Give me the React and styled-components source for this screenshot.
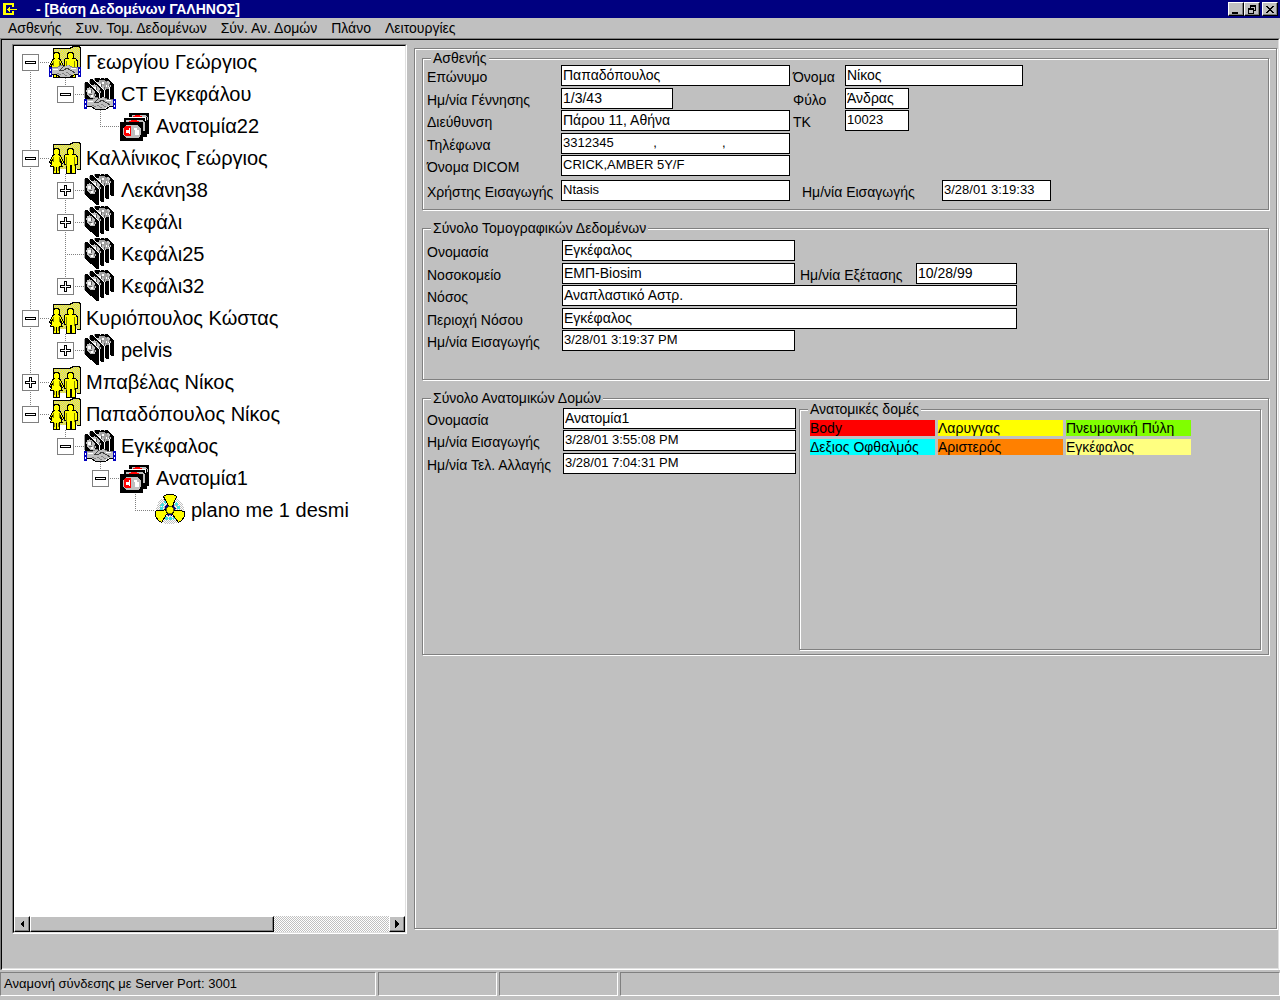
import React from "react";
import styled, { createGlobalStyle, css } from "styled-components";

const face = "#c0c0c0";
const shade = "#808080";
const light = "#e0e0e0";

const GlobalStyle = createGlobalStyle`
  *, *::before, *::after { box-sizing: border-box; }
  body {
    margin: 0;
    background: ${face};
    color: #000;
    font: 14px/16px "Liberation Sans", Arial, sans-serif;
  }
  button, input { font: inherit; color: inherit; }
`;

const etched = css`
  border: 1px solid ${shade};
  box-shadow: 1px 1px 0 #fff, inset 1px 1px 0 #fff;
`;

const raised = css`
  border: 1px solid;
  border-color: #fff #000 #000 #fff;
  box-shadow: inset -1px -1px 0 ${shade};
  background: ${face};
`;

const Window = styled.div`
  display: flex;
  flex-direction: column;
  min-height: 100vh;
`;

const TitleBar = styled.header`
  display: flex;
  align-items: center;
  height: 18px;
  padding: 0 2px;
  background: #000080;
  color: #fff;
`;

const Title = styled.h1`
  flex: 1;
  margin: 0 0 0 18px;
  font-size: 14px;
  line-height: 18px;
  font-weight: bold;
  white-space: pre;
`;

const CaptionButton = styled.button`
  ${raised}
  display: flex;
  align-items: center;
  justify-content: center;
  width: 16px;
  height: 14px;
  padding: 0;
  margin-left: ${(p) => (p.$apart ? "2px" : "0")};
`;

const MenuBar = styled.nav`
  display: flex;
  gap: 14px;
  height: 20px;
  padding: 0 8px;
`;

const MenuItem = styled.button`
  border: 0;
  background: none;
  padding: 0;
  line-height: 20px;
`;

const Workspace = styled.main`
  flex: 1;
  display: flex;
  padding: 4px 1px 35px 10px;
  border: 1px solid;
  border-color: #000 ${light} #fff #000;
  box-shadow: inset 0 -1px 0 ${light};
`;

const Frame = styled.div`
  flex: 1;
  display: flex;
  border-style: solid;
  border-width: 1px 1px 0 1px;
  border-color: ${shade} #fff #fff ${shade};
`;

const TreePane = styled.section`
  flex: 0 1 395px;
  display: flex;
  flex-direction: column;
  border: 1px solid;
  border-color: ${shade} #fff #fff ${shade};
  background: #fff;
`;

const TreeInner = styled.div`
  flex: 1;
  display: flex;
  flex-direction: column;
  border: 1px solid;
  border-color: #000 ${light} ${light} #000;
`;

const TreeList = styled.ul`
  flex: 1;
  margin: 0;
  padding: 0;
  list-style: none;
`;

const TreeRow = styled.li`
  display: flex;
  align-items: center;
  height: 32px;
  font-size: 20px;
  line-height: 32px;
  white-space: nowrap;
`;

const TreeLabel = styled.span`
  margin-left: 5px;
`;

const Expander = styled.button`
  display: block;
  border: 0;
  padding: 0;
  background: none;
`;

const Drawing = styled.svg`
  display: block;
  flex: none;
  shape-rendering: crispEdges;
`;

const ScrollBar = styled.div`
  display: flex;
  height: 16px;
  background: repeating-conic-gradient(#fff 0 25%, ${face} 0 50%) 0 0 / 2px 2px;
`;

const ScrollButton = styled.button`
  ${raised}
  display: flex;
  align-items: center;
  justify-content: center;
  width: 16px;
  padding: 0;
`;

const ScrollThumb = styled.div`
  ${raised}
  width: 68%;
`;

const ScrollTrack = styled.div`
  flex: 1;
  display: flex;
`;

const DetailPane = styled.section`
  ${etched}
  flex: 1;
  display: flex;
  flex-direction: column;
  gap: 11px;
  margin: 4px 0 5px 7px;
  padding: 2px 7px;
`;

const Group = styled.fieldset`
  ${etched}
  min-width: 0;
  min-height: ${(p) => p.$height}px;
  margin: 0;
  padding: ${(p) => p.$top || 0}px 7px 4px 4px;
`;

const Legend = styled.legend`
  margin-left: ${(p) => (p.$flush ? 0 : 4)}px;
  padding: 0 2px;
  line-height: 14px;
  background: ${face};
`;

const Split = styled.div`
  display: flex;
`;

const Nested = styled(Group)`
  flex: 1;
  margin: -6px 0 0 3px;
  padding: 4px 8px;
`;

const Rows = styled.div`
  display: grid;
  grid-template-rows: ${(p) => p.$tracks};
  align-items: start;
`;

const Row = styled.div`
  display: grid;
  grid-template-columns: ${(p) => p.$label}px ${(p) => p.$field}px auto;
  align-items: start;
  justify-content: start;
`;

const Label = styled.label`
  padding: 4px 0 0 ${(p) => p.$indent || 0}px;
  width: ${(p) => (p.$w ? p.$w + "px" : "auto")};
  white-space: nowrap;
`;

const Field = styled.input`
  width: ${(p) => (p.$w ? p.$w + "px" : "100%")};
  grid-column: ${(p) => (p.$wide ? "span 2" : "auto")};
  height: 21px;
  padding: 0 1px 2px;
  border: 1px solid #000;
  border-radius: 0;
  background: #fff;
  font-size: ${(p) => (p.$latin ? 13 : 14)}px;
  outline: 0;
`;

const Side = styled.div`
  display: flex;
`;

const Swatches = styled.ul`
  display: grid;
  grid-template-columns: repeat(3, 125px);
  gap: 3px;
  margin: 0;
  padding: 0 2px;
  list-style: none;
`;

const Swatch = styled.li`
  height: 16px;
  background: ${(p) => p.$color};
`;

const StatusBar = styled.footer`
  display: flex;
  gap: 2px;
  height: 30px;
  padding: 2px 0 4px;
`;

const StatusPane = styled.div`
  flex: ${(p) => (p.$w ? `0 1 ${p.$w}px` : "1")};
  padding: 2px 3px;
  border: 1px solid;
  border-color: ${shade} #fff #fff ${shade};
  font-size: 13px;
  line-height: 18px;
`;

function Guide({ up, down, side, box }) {
  return (
    <Drawing width="35" height="32" viewBox="0 0 35 32" aria-hidden="true">
      <g stroke={shade} strokeDasharray="1 1" fill="none">
        {up && <path d="M16.5 0V16" />}
        {down && <path d="M16.5 16V32" />}
        {side && <path d="M16 16.5H35" />}
      </g>
      {box && (
        <>
          <rect x="8.5" y="8.5" width="16" height="16" fill="#fff" stroke={shade} />
          {box === "minus" ? (
            <rect x="11.5" y="15.5" width="10" height="2" fill="#fff" stroke="#000" />
          ) : (
            <path d="M15.5 11.5h2v4h4v2h-4v4h-2v-4h-4v-2h4z" fill="#fff" stroke="#000" />
          )}
        </>
      )}
    </Drawing>
  );
}

function Hands() {
  return (
    <g>
      <path d="M3 21h5l4-2 4 1 4-1 4 2h5v7h-4l-5 3h-9l-5-3H3z" fill="#c0c0c0" />
      <path d="M3 28.500h4l5 3h9l5-3h3" fill="none" stroke="#000" />
      <path d="M3 21.500h5l4-2 4 1M20 19.500l4 2h5" fill="none" stroke="#808080" />
      <path d="M15 20l-4 4h4l3-2 8 5" fill="none" stroke="#404040" />
      <path d="M8 27l4 2M13 27l5 3M17 26l5 3" fill="none" stroke="#808080" />
      <path d="M4 23h5v1H4zM22 22h5v1h-5z" fill="#fff" />
      <path d="M0 21h3v10H0zM29 21h3v10h-3z" fill="#0000c0" />
      <path d="M1 23h1v2H1zM1 27h1v2H1zM30 23h1v2h-1zM30 27h1v2h-1z" fill="#fff" />
    </g>
  );
}

function PatientArt() {
  return (
    <g>
      <path d="M4 2H21V1H23V0H30V1H31V27H4z" fill="url(#folder)" />
      <path d="M4.500 8V2.500H21.500V1.500H23.500V.5H30.500V1.500H31.500V27.500H28" fill="none" stroke="#000" />
      <g fill="#ffff00" stroke="#000">
        <path d="M6 6.500h3l1.500 1.500v3L9.500 12.500l2 1 3 7-1.500 1-2-4 2 7h-3v6.500h-3v-6H7v6H4.500v-6.500H1.500l2-7-2 4L.5 20.500l3-7 2-1L4.500 11V8z" />
        <path d="M20 6.500h3L24.500 8v3L23.500 12.500h3l1.500 2v8h-2v8.500h-4v-8h-1v8h-4v-8.500h-2v-8l1.500-2h3L18.500 11V8z" />
      </g>
      <path d="M4.500 15v5M10.500 15v5M17.500 15v9M25.500 15v9M5.500 25v4M9.500 25v4" stroke="#808000" fill="none" />
    </g>
  );
}

function Slices() {
  return (
    <g>
      {[3, 2, 1, 0].map((i) => (
        <g key={i} transform={`translate(${i * 5} ${i * -3})`}>
          <path d="M0 5l2-1h2l11 12v15h-2L0 20z" fill="#000" />
          <path d="M3 3l12 12v17" stroke="#fff" fill="none" />
          <path d="M.5 5v15" stroke="#a0a0a0" fill="none" />
          <ellipse cx="7" cy="15" rx="4" ry="6" transform="rotate(-32 7 15)" fill="#c0c0c0" />
          <path d="M4 12h3v3H4zM7 17h2v2H7z" fill="#fff" />
          <path d="M7.500 11v4M5 16.500h3M10 15v3" stroke="#606060" fill="none" />
        </g>
      ))}
      <path d="M13 1h12v2H13z" fill="#000" />
      <path d="M15 2l5 0 4 4 1 5-3 0-4-4z" fill="#a0a0a0" />
      <path d="M18 4h2v2h-2zM22 7h1v2h-1z" fill="#fff" />
    </g>
  );
}

function AnatomyArt() {
  return (
    <g>
      <path d="M10 3h20v21H10z" fill="#000" />
      <path d="M13 5h14l2 3v2H13z" fill="#c0c0c0" />
      <path d="M14 8V6h2V5h5v1h2v3h-2V7h-5v2z" fill="#ff0000" />
      <path d="M5 7h23v20H5z" fill="#000" />
      <path d="M5 7.500H10M10 7.500H26V11" stroke="#fff" fill="none" />
      <path d="M7 10h17l2 3v8H8z" fill="#c0c0c0" />
      <path d="M10 13v-2h2v-1h6v1h2v2z" fill="#ff0000" />
      <path d="M1 12h23v19H1z" fill="#000" />
      <path d="M7 15h12l3 4v5l-2 4H7l-3-3v-7z" fill="#c0c0c0" />
      <path d="M6 16h6v10H6l-1-2v-6z" fill="#ff0000" />
      <path d="M7 20h3v-2h1v6h-1v-1H7z" fill="#fff" />
      <path d="M16 20h4v5h-4zM15 18h3v2h-3z" fill="#fff" />
    </g>
  );
}

function PlanArt() {
  const blade = "M9.500 2.500L13 .5h6l3.500 2L18.500 12h-4z";
  return (
    <g>
      <circle cx="16" cy="16.500" r="14" fill="url(#haze)" />
      <circle cx="16" cy="16" r="9" fill="none" stroke="#40e0e0" strokeWidth="3" strokeDasharray="3 1" />
      <circle cx="16" cy="16" r="6" fill="#000080" />
      <circle cx="16" cy="16" r="6" fill="none" stroke="#c0c0c0" strokeDasharray="2 2" />
      {[0, 120, 240].map((a) => (
        <path key={a} d={blade} transform={`rotate(${a} 16 16)`} fill="#ffff00" stroke="#000" />
      ))}
      <circle cx="16" cy="16" r="3.500" fill="#ffff00" stroke="#606000" />
    </g>
  );
}

function ItemIcon({ kind, shared }) {
  return (
    <Drawing width="32" height="32" viewBox="0 0 32 32" aria-hidden="true">
      {kind === "patient" && <PatientArt />}
      {kind === "dataset" && <Slices />}
      {kind === "anatomy" && <AnatomyArt />}
      {kind === "plan" && <PlanArt />}
      {shared && <Hands />}
    </Drawing>
  );
}

const line = { up: true, down: true };
const none = {};
const tee = { up: true, down: true, side: true };
const end = { up: true, side: true };

const tree = [
  { text: "Γεωργίου Γεώργιος", kind: "patient", shared: true, guides: [{ down: true, side: true, box: "minus" }] },
  { text: "CT Εγκεφάλου", kind: "dataset", shared: true, guides: [line, { ...end, box: "minus" }] },
  { text: "Ανατομία22", kind: "anatomy", guides: [line, none, end] },
  { text: "Καλλίνικος Γεώργιος", kind: "patient", guides: [{ ...tee, box: "minus" }] },
  { text: "Λεκάνη38", kind: "dataset", guides: [line, { ...tee, box: "plus" }] },
  { text: "Κεφάλι", kind: "dataset", guides: [line, { ...tee, box: "plus" }] },
  { text: "Κεφάλι25", kind: "dataset", guides: [line, tee] },
  { text: "Κεφάλι32", kind: "dataset", guides: [line, { ...end, box: "plus" }] },
  { text: "Κυριόπουλος Κώστας", kind: "patient", guides: [{ ...tee, box: "minus" }] },
  { text: "pelvis", kind: "dataset", guides: [line, { ...end, box: "plus" }] },
  { text: "Μπαβέλας Νίκος", kind: "patient", guides: [{ ...tee, box: "plus" }] },
  { text: "Παπαδόπουλος Νίκος", kind: "patient", guides: [{ ...end, box: "minus" }] },
  { text: "Εγκέφαλος", kind: "dataset", shared: true, guides: [none, { ...end, box: "minus" }] },
  { text: "Ανατομία1", kind: "anatomy", guides: [none, none, { ...end, box: "minus" }] },
  { text: "plano me 1 desmi", kind: "plan", guides: [none, none, none, end] },
];

const menus = ["Ασθενής", "Συν. Τομ. Δεδομένων", "Σύν. Αν. Δομών", "Πλάνο", "Λειτουργίες"];

const structures = [
  ["Body", "#ff0000"],
  ["Λαρυγγας", "#ffff00"],
  ["Πνευμονική Πύλη", "#80ff00"],
  ["Δεξιος Οφθαλμός", "#00ffff"],
  ["Αριστερός", "#ff8000"],
  ["Εγκέφαλος", "#ffff80"],
];

const phones = "3312345" + " ".repeat(11) + "," + " ".repeat(18) + ",";

const patientCols = { $label: 134, $field: 229 };
const datasetCols = { $label: 135, $field: 233 };
const anatomyCols = { $label: 136, $field: 233 };

function Entry({ id, label, value, w, wide, latin, labelWidth, indent }) {
  return (
    <>
      <Label htmlFor={id} $w={labelWidth} $indent={indent}>
        {label}
      </Label>
      <Field id={id} defaultValue={value} $w={w} $wide={wide} $latin={latin} />
    </>
  );
}

export default function App() {
  return (
    <Window>
      <GlobalStyle />
      <TitleBar>
        <Drawing width="16" height="16" viewBox="0 0 16 16" aria-hidden="true">
          <path d="M1 2h11v4h-2V4H4v8h6v-2h2v4H1z" fill="#ffff00" />
          <path d="M5 8l2-2h1v2h7v1H8v2H7L5 9z" fill="#ffff00" />
        </Drawing>
        <Title>- [Βάση Δεδομένων ΓΑΛΗΝΟΣ]</Title>
        <CaptionButton aria-label="Ελαχιστοποίηση">
          <Drawing width="10" height="9" aria-hidden="true">
            <path d="M1 7h6v2H1z" />
          </Drawing>
        </CaptionButton>
        <CaptionButton aria-label="Επαναφορά">
          <Drawing width="10" height="9" aria-hidden="true">
            <path d="M3 0h6v6H7V5h1V2H4v1H3zM1 3h6v6H1zM2 5v3h4V5z" fillRule="evenodd" />
          </Drawing>
        </CaptionButton>
        <CaptionButton $apart aria-label="Κλείσιμο">
          <Drawing width="10" height="9" aria-hidden="true">
            <path d="M1 1h2v1h1v1h2V2h1V1h2v1H8v1H7v1H6v1h1v1h1v1h1v1H7V7H6V6H4v1H3v1H1V7h1V6h1V5h1V4H3V3H2V2H1z" />
          </Drawing>
        </CaptionButton>
      </TitleBar>
      <MenuBar>
        {menus.map((m) => (
          <MenuItem key={m}>{m}</MenuItem>
        ))}
      </MenuBar>
      <Frame>
        <Workspace>
          <TreePane>
            <TreeInner>
              <TreeList>
                {tree.map((item) => (
                  <TreeRow key={item.text}>
                    {item.guides.map((g, i) =>
                      g.box ? (
                        <Expander key={i} aria-label={item.text} aria-expanded={g.box === "minus"}>
                          <Guide {...g} />
                        </Expander>
                      ) : (
                        <Guide key={i} {...g} />
                      )
                    )}
                    <ItemIcon kind={item.kind} shared={item.shared} />
                    <TreeLabel>{item.text}</TreeLabel>
                  </TreeRow>
                ))}
              </TreeList>
              <ScrollBar>
                <ScrollButton aria-label="Αριστερά">
                  <Drawing width="8" height="8" aria-hidden="true">
                    <path d="M6 0v8L2 4z" />
                  </Drawing>
                </ScrollButton>
                <ScrollTrack>
                  <ScrollThumb />
                </ScrollTrack>
                <ScrollButton aria-label="Δεξιά">
                  <Drawing width="8" height="8" aria-hidden="true">
                    <path d="M2 0v8l4-4z" />
                  </Drawing>
                </ScrollButton>
              </ScrollBar>
            </TreeInner>
          </TreePane>

          <DetailPane>
            <Group $height={159}>
              <Legend>Ασθενής</Legend>
              <Rows $tracks="23px 22px 23px 22px 25px 21px">
                <Row {...patientCols}>
                  <Entry id="surname" label="Επώνυμο" value="Παπαδόπουλος" />
                  <Side>
                    <Entry id="name" label="Όνομα" value="Νίκος" w={178} labelWidth={55} indent={3} />
                  </Side>
                </Row>
                <Row {...patientCols}>
                  <Entry id="birth" label="Ημ/νία Γέννησης" value="1/3/43" w={112} />
                  <Side>
                    <Entry id="sex" label="Φύλο" value="Άνδρας" w={64} labelWidth={55} indent={3} />
                  </Side>
                </Row>
                <Row {...patientCols}>
                  <Entry id="address" label="Διεύθυνση" value="Πάρου 11, Αθήνα" />
                  <Side>
                    <Entry id="zip" label="ΤΚ" value="10023" w={64} labelWidth={55} indent={3} latin />
                  </Side>
                </Row>
                <Row {...patientCols}>
                  <Entry id="phones" label="Τηλέφωνα" value={phones} latin />
                </Row>
                <Row {...patientCols}>
                  <Entry id="dicom" label="Όνομα DICOM" value="CRICK,AMBER 5Y/F" latin />
                </Row>
                <Row {...patientCols}>
                  <Entry id="user" label="Χρήστης Εισαγωγής" value="Ntasis" latin />
                  <Side>
                    <Entry id="entered" label="Ημ/νία Εισαγωγής" value="3/28/01 3:19:33" w={109} labelWidth={152} indent={12} latin />
                  </Side>
                </Row>
              </Rows>
            </Group>

            <Group $height={159} $top={5}>
              <Legend>Σύνολο Τομογραφικών Δεδομένων</Legend>
              <Rows $tracks="23px 22px 23px 22px 21px">
                <Row {...datasetCols}>
                  <Entry id="set-name" label="Ονομασία" value="Εγκέφαλος" />
                </Row>
                <Row {...datasetCols}>
                  <Entry id="hospital" label="Νοσοκομείο" value="ΕΜΠ-Biosim" />
                  <Side>
                    <Entry id="exam" label="Ημ/νία Εξέτασης" value="10/28/99" w={101} labelWidth={121} indent={5} />
                  </Side>
                </Row>
                <Row {...datasetCols}>
                  <Entry id="disease" label="Νόσος" value="Αναπλαστικό Αστρ." w={455} wide />
                </Row>
                <Row {...datasetCols}>
                  <Entry id="region" label="Περιοχή Νόσου" value="Εγκέφαλος" w={455} wide />
                </Row>
                <Row {...datasetCols}>
                  <Entry id="set-entered" label="Ημ/νία Εισαγωγής" value="3/28/01 3:19:37 PM" latin />
                </Row>
              </Rows>
            </Group>

            <Group $height={264} $top={3}>
              <Legend>Σύνολο Ανατομικών Δομών</Legend>
              <Split>
                <Rows $tracks="22px 23px 21px">
                  <Row {...anatomyCols}>
                    <Entry id="anat-name" label="Ονομασία" value="Ανατομία1" />
                  </Row>
                  <Row {...anatomyCols}>
                    <Entry id="anat-entered" label="Ημ/νία Εισαγωγής" value="3/28/01 3:55:08 PM" latin />
                  </Row>
                  <Row {...anatomyCols}>
                    <Entry id="anat-changed" label="Ημ/νία Τελ. Αλλαγής" value="3/28/01 7:04:31 PM" latin />
                  </Row>
                </Rows>
                <Nested $height={248}>
                  <Legend $flush>Ανατομικές δομές</Legend>
                  <Swatches>
                    {structures.map(([name, color]) => (
                      <Swatch key={name} $color={color}>
                        {name}
                      </Swatch>
                    ))}
                  </Swatches>
                </Nested>
              </Split>
            </Group>
          </DetailPane>
        </Workspace>
      </Frame>
      <StatusBar>
        <StatusPane $w={376}>Αναμονή σύνδεσης με Server Port: 3001</StatusPane>
        <StatusPane $w={119} />
        <StatusPane $w={119} />
        <StatusPane />
      </StatusBar>
      <svg width="0" height="0" style={{ position: "absolute" }} aria-hidden="true">
        <defs>
          <pattern id="folder" width="2" height="2" patternUnits="userSpaceOnUse">
            <path d="M0 0h2v2H0z" fill="#c0c0c0" />
            <path d="M0 0h1v1H0zM1 1h1v1H1z" fill="#ffff00" />
          </pattern>
          <pattern id="haze" width="2" height="2" patternUnits="userSpaceOnUse">
            <path d="M0 0h1v1H0zM1 1h1v1H1z" fill="#c0c0c0" />
          </pattern>
        </defs>
      </svg>
    </Window>
  );
}
